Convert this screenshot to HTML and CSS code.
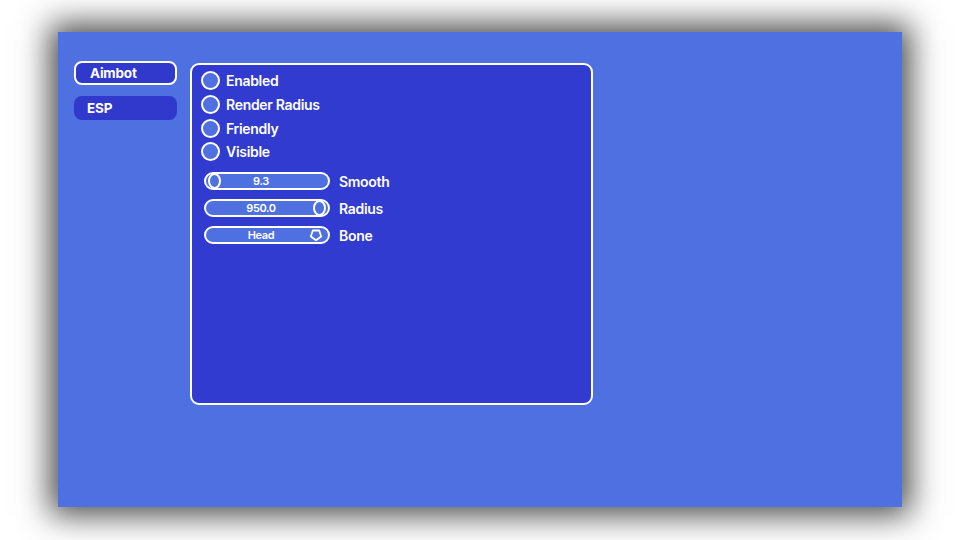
FILE: index.html
```html
<!DOCTYPE html>
<html>
<head>
<meta charset="utf-8">
<link rel="stylesheet" href="styles.css">
</head>
<body>
<div class="window">
  <div class="sidebar">
    <div class="tab active">Aimbot</div>
    <div class="tab">ESP</div>
  </div>
  <div class="panel">
    <div class="check"><span class="circle"></span><span class="label">Enabled</span></div>
    <div class="check"><span class="circle"></span><span class="label">Render Radius</span></div>
    <div class="check"><span class="circle"></span><span class="label">Friendly</span></div>
    <div class="check last"><span class="circle"></span><span class="label">Visible</span></div>
    <div class="controls">
      <div class="control">
        <div class="track"><span class="thumb left"></span><span class="value">9.3</span></div>
        <span class="clabel">Smooth</span>
      </div>
      <div class="control">
        <div class="track"><span class="value">950.0</span><span class="thumb right"></span></div>
        <span class="clabel">Radius</span>
      </div>
      <div class="control">
        <div class="track"><span class="value">Head</span>
          <svg class="arrow" width="14" height="14" viewBox="0 0 14 14"><path d="M7 12.3 L12.2 8.5 L10.2 2.5 L3.8 2.5 L1.8 8.5 Z" fill="none" stroke="#fff" stroke-width="1.8" stroke-linejoin="round"/></svg>
        </div>
        <span class="clabel">Bone</span>
      </div>
    </div>
  </div>
</div>
</body>
</html>
```
FILE: styles.css
```css
html, body {
  margin: 0;
  padding: 0;
  background: #ffffff;
  width: 960px;
  height: 540px;
  overflow: hidden;
}
body {
  font-family: "Inter", "Liberation Sans", sans-serif;
  color: #ffffff;
}
.window {
  box-sizing: border-box;
  margin: 32px 0 0 58px;
  width: 844px;
  height: 475px;
  background: #4e70e0;
  box-shadow: 0 0 30px 8px rgba(0, 0, 0, 0.72);
  display: flex;
  align-items: flex-start;
  gap: 13px;
  padding: 29px 16px;
}
.sidebar {
  width: 103px;
  display: flex;
  flex-direction: column;
  gap: 11px;
}
.tab {
  box-sizing: border-box;
  height: 24px;
  border-radius: 8px;
  background: #3139cc;
  font-size: 13.5px;
  font-weight: 700;
  line-height: 24px;
  padding-left: 13px;
  letter-spacing: -0.2px;
}
.tab.active {
  border: 2px solid #ffffff;
  line-height: 20px;
  padding-left: 14px;
}
.panel {
  box-sizing: border-box;
  margin-top: 2px;
  width: 403px;
  height: 342px;
  border: 2px solid #ffffff;
  border-radius: 9px;
  background: #313bcf;
  padding: 3px 9px;
}
.check {
  height: 24px;
  display: flex;
  align-items: center;
  gap: 6px;
}
.check.last {
  margin-top: -1px;
}
.circle {
  box-sizing: border-box;
  width: 19px;
  height: 19px;
  border-radius: 50%;
  border: 2px solid #ffffff;
  background: #4e70e0;
}
.label {
  font-size: 14px;
  font-weight: 600;
  letter-spacing: -0.3px;
}
.controls {
  margin-top: 9px;
  padding-left: 3px;
  display: flex;
  flex-direction: column;
  gap: 9px;
}
.control {
  display: flex;
  align-items: center;
  gap: 9px;
  height: 18px;
}
.track {
  position: relative;
  box-sizing: border-box;
  width: 126px;
  height: 18px;
  border: 2px solid #ffffff;
  border-radius: 9px;
  background: #4e70e0;
  display: flex;
  align-items: center;
  justify-content: center;
  padding-right: 12px;
}
.value {
  font-size: 11px;
  font-weight: 600;
  letter-spacing: -0.4px;
}
.thumb {
  position: absolute;
  top: -1px;
  box-sizing: border-box;
  width: 13px;
  height: 16px;
  border: 2px solid #ffffff;
  border-radius: 50%;
  background: #4e70e0;
}
.thumb.left { left: 2px; }
.thumb.right { right: 2px; }
.arrow {
  position: absolute;
  right: 5px;
  top: 0px;
}
.clabel {
  font-size: 14px;
  font-weight: 600;
  letter-spacing: -0.3px;
}
```
